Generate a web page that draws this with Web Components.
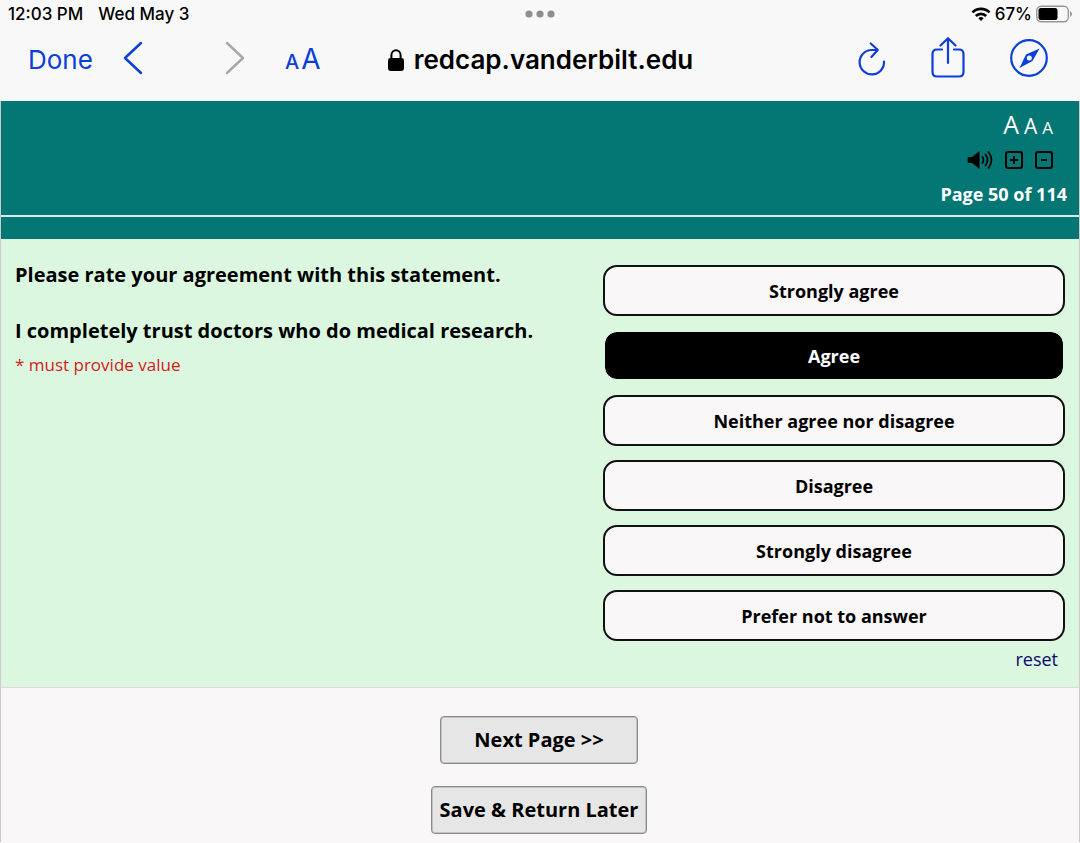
<!DOCTYPE html>
<html lang="en">
<head>
<meta charset="utf-8">
<meta name="viewport" content="width=device-width, initial-scale=1">
<title>Survey</title>
<style>
html, body { margin: 0; min-height: 100%; background: #f9f7f8; }
body { font-family: "Open Sans", "Noto Sans", sans-serif; color: #000; }
</style>
</head>
<body>
<browser-chrome></browser-chrome>
<survey-page>
  <survey-header slot="header">Page 50 of 114</survey-header>
  <survey-question slot="question">
    <span slot="prompt">Please rate your agreement with this statement.</span>
    <span slot="statement">I completely trust doctors who do medical research.</span>
    <survey-choices slot="choices" options="Strongly agree|Agree|Neither agree nor disagree|Disagree|Strongly disagree|Prefer not to answer" selected="1"></survey-choices>
  </survey-question>
  <survey-button wide>Next Page &gt;&gt;</survey-button>
  <survey-button>Save &amp; Return Later</survey-button>
</survey-page>

<script>
const define = (name, html, setup) => {
  const template = document.createElement('template');
  template.innerHTML = html;
  customElements.define(name, class extends HTMLElement {
    constructor() {
      super();
      this.attachShadow({ mode: 'open' }).append(template.content.cloneNode(true));
    }
    connectedCallback() { if (setup) setup(this, this.shadowRoot); }
  });
};

define('browser-chrome', `
<style>
:host { display: block; background: #f8f8f8; font-family: Inter, sans-serif; }
.status { display: grid; grid-template-columns: 1fr auto 1fr; align-items: center; height: 28px; padding: 0 8px; font-size: 17px; font-weight: 500; line-height: 20px; }
.when { display: flex; gap: 15px; }
.power { display: flex; align-items: center; justify-content: flex-end; gap: 4px; }
.tools { display: grid; grid-template-columns: 1fr auto 1fr; align-items: center; height: 73px; padding: 0 32px 9px 28px; box-sizing: border-box; color: #0b3fd8; }
.left, .right, .address { display: flex; align-items: center; }
.right { justify-content: flex-end; gap: 45px; padding-bottom: 4px; }
button { all: unset; display: block; cursor: pointer; }
svg { display: block; }
.left svg { margin-bottom: 4px; }
.done { font-size: 26px; line-height: 32px; width: 95px; }
.back { width: 102px; }
.forward { width: 60px; }
.size { font-size: 28px; line-height: 36px; }
.size small { font-size: 20px; font-weight: 500; margin-right: 2px; }
.address { gap: 10px; padding-left: 5px; color: #000; font-size: 26px; font-weight: 600; line-height: 32px; }
</style>
<div class="status">
  <div class="when"><span>12:03 PM</span><span>Wed May 3</span></div>
  <svg width="30" height="8" fill="#8e8e90"><circle cx="4" cy="4" r="3.6"/><circle cx="15" cy="4" r="3.6"/><circle cx="26" cy="4" r="3.6"/></svg>
  <div class="power">
    <svg width="20" height="15" viewBox="0 0 20 15" fill="none" stroke="#000" stroke-width="2.6"><path d="M1.4 5.4a12.2 12.2 0 0 1 17.2 0M4.8 9a7.4 7.4 0 0 1 10.4 0"/><path d="M10 13.9l-2.7-2.7a3.9 3.9 0 0 1 5.4 0z" fill="#000" stroke="none"/></svg>
    <span>67%</span>
    <svg width="36" height="18" viewBox="0 0 36 18"><rect x=".8" y="1.3" width="31.500" height="15.400" rx="4.500" fill="none" stroke="#979797" stroke-width="1.400"/><rect x="2.500" y="3" width="19" height="12" rx="2.500"/><path d="M34 6q2 1 2 3t-2 3z" fill="#979797"/></svg>
  </div>
</div>
<div class="tools">
  <div class="left">
    <button class="done">Done</button>
    <button class="back" aria-label="Back"><svg width="20" height="34" fill="none" stroke="currentColor" stroke-width="2.5" stroke-linecap="round" stroke-linejoin="round"><path d="M18 2L2 17l16 15"/></svg></button>
    <button class="forward" aria-label="Forward"><svg width="20" height="34" fill="none" stroke="#a8a8aa" stroke-width="2.5" stroke-linecap="round" stroke-linejoin="round"><path d="M2 2l16 15L2 32"/></svg></button>
    <button class="size" aria-label="Text size"><small>A</small>A</button>
  </div>
  <div class="address">
    <svg width="16" height="22" viewBox="0 0 16 22"><rect x="0" y="9" width="16" height="13" rx="2.4"/><path d="M3.4 10V6.2a4.6 4.9 0 0 1 9.2 0V10" fill="none" stroke="#000" stroke-width="2"/></svg>
    <span>redcap.vanderbilt.edu</span>
  </div>
  <div class="right">
    <button aria-label="Reload"><svg width="28" height="42" viewBox="0 0 28 42" fill="none" stroke="currentColor" stroke-width="2.2" stroke-linecap="round" stroke-linejoin="round"><path d="M26 24.500A12.200 12.200 0 1 1 14 13h5M12.800 6.500l7 6.500-6.400 7"/></svg></button>
    <button aria-label="Share"><svg width="34" height="42" viewBox="0 0 34 42" fill="none" stroke="currentColor" stroke-width="2.2" stroke-linecap="round" stroke-linejoin="round"><path d="M11 12.500H6Q1.500 12.500 1.500 17v18Q1.500 39.500 6 39.500h22q4.500 0 4.500-4.500V17q0-4.500-4.500-4.500h-5M17 26V1.500M9.500 8.500L17 1.200 24.500 8.500"/></svg></button>
    <button aria-label="Open in Safari"><svg width="38" height="42" viewBox="0 0 38 42"><circle cx="19" cy="21" r="17.800" fill="none" stroke="currentColor" stroke-width="2.200"/><path d="M29.500 11.500L22.500 24 9.500 31 16 17.500z" fill="currentColor"/><circle cx="19.300" cy="21" r="2.500" fill="#f8f8f8"/></svg></button>
  </div>
</div>`);

define('survey-page', `
<style>
:host { display: block; border: solid #cbcbcd; border-width: 0 1px; }
.actions { display: flex; flex-direction: column; align-items: center; gap: 22px; padding: 28px 2px 8px 0; border-top: 1px solid #dcdcdc; }
</style>
<slot name="header"></slot>
<main><slot name="question"></slot></main>
<div class="actions"><slot></slot></div>`);

define('survey-header', `
<style>
:host { display: block; background: #047673; color: #fff; }
.top { display: flex; flex-direction: column; align-items: flex-end; height: 116px; box-sizing: border-box; padding: 8px 12px 0; border-bottom: 2px solid #d9ecea; }
.band { height: 22px; }
.row { display: flex; margin-right: 14px; }
.fonts { align-items: baseline; gap: 5px; height: 34px; line-height: 30px; font-weight: 400; }
.tools { align-items: center; gap: 12px; height: 34px; }
button { all: unset; display: block; cursor: pointer; }
svg { display: block; }
.l { font-size: 25px; } .m { font-size: 21px; } .s { font-size: 17px; }
.page { font-size: 18px; font-weight: 700; line-height: 26px; margin-top: 4px; }
</style>
<div class="top">
  <div class="row fonts"><button class="l" aria-label="Large text">A</button><button class="m" aria-label="Medium text">A</button><button class="s" aria-label="Small text">A</button></div>
  <div class="row tools">
    <button aria-label="Read aloud"><svg width="26" height="20" viewBox="0 0 26 20"><path d="M1 7h4l7.500-6v18L5 13H1Q0 10 1 7z"/><g fill="none" stroke="#000" stroke-width="1.700" stroke-linecap="round"><path d="M15.500 7q2 3 0 6M18.500 4.500q4 5.500 0 11M21.500 2q6 8 0 16"/></g></svg></button>
    <button aria-label="Enlarge"><svg width="18" height="18" fill="none" stroke="#000" stroke-width="2"><rect x="1" y="1" width="16" height="16" rx="2"/><path d="M5 9h8M9 5v8"/></svg></button>
    <button aria-label="Reduce"><svg width="18" height="18" fill="none" stroke="#000" stroke-width="2"><rect x="1" y="1" width="16" height="16" rx="2"/><path d="M6 9h6"/></svg></button>
  </div>
  <div class="page"><slot></slot></div>
</div>
<div class="band"></div>`);

define('survey-question', `
<style>
:host { display: grid; grid-template-columns: 1fr 44%; background: #dbf7df; padding: 22px 14px 16px; }
p { margin: 0 0 28px; font-size: 20px; font-weight: 700; line-height: 28px; }
.statement { margin-bottom: 8px; }
.required { margin: 0; font-size: 17px; font-weight: 400; line-height: 24px; color: #d51a1a; }
.answers { padding-top: 4px; }
</style>
<div>
  <p><slot name="prompt"></slot></p>
  <p class="statement"><slot name="statement"></slot></p>
  <p class="required">* must provide value</p>
</div>
<div class="answers"><slot name="choices"></slot></div>`);

define('survey-choices', `
<style>
:host { display: block; }
fieldset { display: grid; gap: 14px; margin: 0; padding: 0; border: 0; min-width: 0; }
label { position: relative; display: block; box-sizing: border-box; height: 51px; border: 2px solid #111; border-radius: 14px; background: #f9f7f8; text-align: center; font-size: 18px; font-weight: 700; line-height: 48px; cursor: pointer; }
label:has(input:checked) { background: #000; color: #fff; border-color: #dbf7df; background-clip: padding-box; }
input { position: absolute; inset: 0; margin: 0; opacity: 0; width: 100%; height: 100%; cursor: pointer; }
.reset { display: flex; justify-content: flex-end; padding: 6px 7px 0; font-size: 18px; line-height: 24px; }
a { color: #0a0a6b; text-decoration: none; }
</style>
<fieldset aria-label="Agreement"></fieldset>
<div class="reset"><a href="#">reset</a></div>`, (host, root) => {
  const group = root.querySelector('fieldset');
  group.replaceChildren(...host.getAttribute('options').split('|').map((text, i) => {
    const label = document.createElement('label');
    const input = document.createElement('input');
    input.type = 'radio';
    input.name = 'agreement';
    input.value = text;
    input.checked = i === Number(host.getAttribute('selected'));
    label.append(input, text);
    return label;
  }));
  root.querySelector('a').addEventListener('click', event => {
    event.preventDefault();
    for (const input of group.querySelectorAll('input')) input.checked = false;
  });
});

define('survey-button', `
<style>
:host { display: block; }
button { box-sizing: border-box; display: block; height: 48px; padding: 0 8px; border: 1px solid #8b8b8b; border-radius: 4px; background: #e6e6e6; color: #000; font: 700 20px/44px "Open Sans", "Noto Sans", sans-serif; box-shadow: inset 0 0 0 1px #c2c2c2; cursor: pointer; }
:host([wide]) button { padding: 0 33px; }
</style>
<button><slot></slot></button>`);
</script>
</body>
</html>
